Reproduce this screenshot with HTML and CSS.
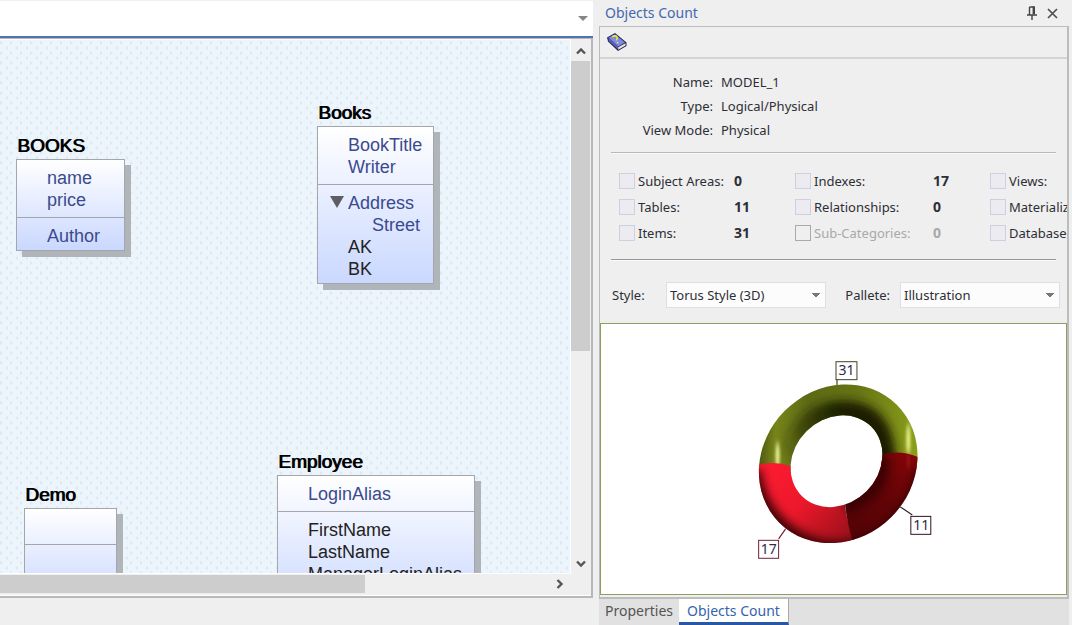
FILE: index.html
```html
<!DOCTYPE html>
<html lang="en">
<head>
<meta charset="utf-8">
<title>Data Modeler</title>
<link rel="stylesheet" href="styles.css">
</head>
<body>
<div class="app">
  <main class="workspace">
    <div class="doc-tabs">
      <button class="icon-btn" type="button" aria-label="Open documents">
        <svg width="10" height="5" viewBox="0 0 10 5"><path d="M0 0h10L5 5z" fill="#868686"/></svg>
      </button>
    </div>
    <div class="viewport">
      <div class="canvas">
        <svg class="texture" aria-hidden="true">
          <defs>
            <pattern id="weave" width="10" height="10" patternUnits="userSpaceOnUse">
              <path d="M0 1l3 2-3 2zM8 6L5 8l3 2z" fill="#dfe8f1"/>
            </pattern>
          </defs>
          <rect width="100%" height="100%" fill="url(#weave)"/>
        </svg>
        <section class="entity entity-books-table">
          <h2 class="entity-name">BOOKS</h2>
          <div class="entity-box">
            <ul class="keys"><li>name</li><li>price</li></ul>
            <ul class="fields"><li class="key">Author</li></ul>
          </div>
        </section>
        <section class="entity entity-books">
          <h2 class="entity-name">Books</h2>
          <div class="entity-box">
            <ul class="keys"><li>BookTitle</li><li>Writer</li></ul>
            <ul class="fields">
              <li class="key group"><svg class="twisty" width="14" height="12" viewBox="0 0 14 12"><path d="M0 0h14L7 12z" fill="#5e5e62"/></svg>Address</li>
              <li class="key nested">Street</li>
              <li>AK</li>
              <li>BK</li>
            </ul>
          </div>
        </section>
        <section class="entity entity-employee">
          <h2 class="entity-name">Employee</h2>
          <div class="entity-box">
            <ul class="keys"><li>LoginAlias</li></ul>
            <ul class="fields"><li>FirstName</li><li>LastName</li><li>ManagerLoginAlias</li><li></li></ul>
          </div>
        </section>
        <section class="entity entity-demo">
          <h2 class="entity-name">Demo</h2>
          <div class="entity-box">
            <ul class="keys"><li></li></ul>
            <ul class="fields"><li></li><li></li></ul>
          </div>
        </section>
      </div>
      <div class="vscroll">
        <button class="icon-btn" type="button" aria-label="Scroll up">
          <svg width="10" height="8" viewBox="0 0 10 8"><path d="M1 6.500L5 2.500 9 6.500" fill="none" stroke="#555" stroke-width="2.400"/></svg>
        </button>
        <div class="vtrack"><div class="vthumb"></div></div>
        <button class="icon-btn" type="button" aria-label="Scroll down">
          <svg width="10" height="8" viewBox="0 0 10 8"><path d="M1 1.500L5 5.500 9 1.500" fill="none" stroke="#555" stroke-width="2.400"/></svg>
        </button>
      </div>
      <div class="hscroll">
        <div class="hthumb"></div>
        <button class="icon-btn" type="button" aria-label="Scroll right">
          <svg width="8" height="10" viewBox="0 0 8 10"><path d="M1.500 1L5.500 5 1.500 9" fill="none" stroke="#555" stroke-width="2.400"/></svg>
        </button>
      </div>
    </div>
  </main>

  <aside class="dock">
    <header class="dock-title">
      <h1>Objects Count</h1>
      <button class="icon-btn" type="button" aria-label="Pin">
        <svg width="10" height="14" viewBox="0 0 10 14"><path d="M2.500 1h5M2.500 1v7.500M0 9h10M5 9v5" fill="none" stroke="#444" stroke-width="1.400"/><path d="M6.800 .5v8" stroke="#444" stroke-width="2.400"/></svg>
      </button>
      <button class="icon-btn" type="button" aria-label="Close">
        <svg width="11" height="11" viewBox="0 0 11 11"><path d="M1 1l9 9M10 1l-9 9" stroke="#505050" stroke-width="1.700"/></svg>
      </button>
    </header>
    <div class="dock-body">
      <div class="toolbar">
        <button class="icon-btn" type="button" aria-label="Help">
          <svg width="22" height="20" viewBox="0 0 22 20">
            <path d="M1 5.500L9 1l11.500 9.500v3.500L12 19 2 9.500z" fill="#26264c"/>
            <path d="M12.200 15.200l7.300-4v2.300l-7.300 4.300z" fill="#ece9df"/>
            <path d="M2.500 5.700L9 2.200l10 8.300-6.800 4z" fill="#7f89e4"/>
            <path d="M2.500 5.700l9.700 8.800v3L2.800 9z" fill="#5660bc"/>
            <path d="M6.500 5.200C7 3.600 9.500 3.300 10.800 4.700c1.200 1.400-.3 2.300-.3 3.700M11 10.200l1.300 1" fill="none" stroke="#e6e23c" stroke-width="1.700"/>
          </svg>
        </button>
      </div>
      <dl class="facts">
        <dt>Name:</dt><dd>MODEL_1</dd>
        <dt>Type:</dt><dd>Logical/Physical</dd>
        <dt>View Mode:</dt><dd>Physical</dd>
      </dl>
      <hr class="rule">
      <div class="counts">
        <div class="count-col count-first">
          <label><input type="checkbox">Subject Areas:</label><output>0</output>
          <label><input type="checkbox">Tables:</label><output>11</output>
          <label><input type="checkbox">Items:</label><output>31</output>
        </div>
        <div class="count-col count-second">
          <label><input type="checkbox">Indexes:</label><output>17</output>
          <label><input type="checkbox">Relationships:</label><output>0</output>
          <label class="off"><input type="checkbox" disabled>Sub-Categories:</label><output class="off">0</output>
        </div>
        <div class="count-col count-third">
          <label><input type="checkbox">Views:</label>
          <label><input type="checkbox">Materialized</label>
          <label><input type="checkbox">Databases:</label>
        </div>
      </div>
      <hr class="rule rule-dark">
      <div class="options">
        <label for="style">Style:</label>
        <select id="style"><option>Torus Style (3D)</option></select>
        <label class="second" for="pallete">Pallete:</label>
        <select id="pallete"><option>Illustration</option></select>
      </div>
      <div class="chart">
        <svg class="torus" viewBox="601 324 466 270" role="img" aria-label="Items 31, Indexes 17, Tables 11">
          <defs>
            <linearGradient id="olive" gradientUnits="userSpaceOnUse" x1="760" y1="430" x2="918" y2="440">
              <stop offset="0" stop-color="#4c5610"/><stop offset=".1" stop-color="#76841a"/><stop offset=".3" stop-color="#5d6913"/><stop offset=".6" stop-color="#667413"/><stop offset="1" stop-color="#8a9e1a"/>
            </linearGradient>
            <linearGradient id="crimson" gradientUnits="userSpaceOnUse" x1="775" y1="462" x2="852" y2="535">
              <stop offset="0" stop-color="#fb1b31"/><stop offset=".45" stop-color="#ed182b"/><stop offset="1" stop-color="#9b101a"/>
            </linearGradient>
            <linearGradient id="maroon" gradientUnits="userSpaceOnUse" x1="915" y1="450" x2="845" y2="535">
              <stop offset="0" stop-color="#860509"/><stop offset=".5" stop-color="#620306"/><stop offset="1" stop-color="#530306"/>
            </linearGradient>
            <linearGradient id="fade" gradientUnits="userSpaceOnUse" x1="850" y1="420" x2="796" y2="470">
              <stop offset="0" stop-color="#1a1e02"/><stop offset=".5" stop-color="#1a1e02" stop-opacity=".5"/><stop offset="1" stop-color="#1a1e02" stop-opacity="0"/>
            </linearGradient>
            <clipPath id="ring">
              <path clip-rule="evenodd" transform="translate(838.700 463.800) rotate(-45)" d="M-83.400 0a83.400 75.400 0 1 0 166.800 0a83.400 75.400 0 1 0-166.800 0zM-48.600 -3a49.200 42.600 0 1 0 98.400 0a49.200 42.600 0 1 0-98.400 0z"/>
            </clipPath>
            <filter id="soft" x="-50%" y="-50%" width="200%" height="200%"><feGaussianBlur stdDeviation="5"/></filter>
            <filter id="glow" x="-400%" y="-50%" width="900%" height="200%"><feGaussianBlur stdDeviation="1.500 3"/></filter>
          </defs>
          <g fill="none" stroke-width="1.200">
            <path d="M837.500 379v6" stroke="#3c4420"/>
            <path d="M901 507l12 8" stroke="#30242a"/>
            <path d="M786 529l-7 10" stroke="#7c2030"/>
          </g>
          <g clip-path="url(#ring)">
            <path d="M750 370h180v100H750z" fill="url(#olive)"/>
            <path d="M790 480C790 438 815 414 844 414S884 432 884 470" fill="none" stroke="url(#fade)" stroke-width="26" filter="url(#soft)"/>
            <ellipse cx="778" cy="456" rx="2" ry="14" fill="#f4f7a0" filter="url(#glow)"/>
            <ellipse cx="909" cy="440" rx="2" ry="16" fill="#eef58c" filter="url(#glow)"/>
            <path d="M755 466Q773 460 791 466L850 480 845.500 505Q847 524 858 545H750z" fill="url(#crimson)"/>
            <path d="M882 455Q900 449 921 458V550H856Q847 524 845.500 502z" fill="url(#maroon)"/>
            <path d="M883 455Q889 488 846 508" fill="none" stroke="#250003" stroke-width="12" stroke-opacity=".7" filter="url(#soft)"/>
            <path d="M753 470C756 514 795 551 842 551C884 549 921 510 924 470" fill="none" stroke="#260005" stroke-width="18" stroke-opacity=".85" filter="url(#soft)"/>
            <ellipse cx="909" cy="461" rx="1" ry="9" fill="#b02826" fill-opacity=".7" filter="url(#glow)"/>
          </g>
          <g class="tags">
            <rect x="836.500" y="361.500" width="21" height="18" fill="#fff" stroke="#3c4420"/>
            <rect x="911.500" y="516.500" width="20" height="18" fill="#fff" stroke="#30141c"/>
            <rect x="759" y="540.500" width="20" height="18" fill="#fff" stroke="#6c2032"/>
            <text x="847" y="375">31</text>
            <text x="922" y="530">11</text>
            <text x="769" y="554">17</text>
          </g>
        </svg>
      </div>
    </div>
    <nav class="dock-tabs">
      <button class="dock-tab" type="button">Properties</button>
      <button class="dock-tab active" type="button">Objects Count</button>
    </nav>
  </aside>
</div>
</body>
</html>
```

FILE: styles.css
```css
* { box-sizing: border-box; }

body {
  margin: 0;
  background: #efefef;
  color: #2e2e36;
  font: 13px/20px "Noto Sans", "Open Sans", sans-serif;
}

h1, h2, ul, dl, dd { margin: 0; padding: 0; font-weight: 400; }
ul { list-style: none; }

.app {
  display: flex;
  gap: 6px;
  height: 100vh;
  padding-right: 3px;
  overflow: hidden;
}

.icon-btn {
  display: flex;
  align-items: center;
  justify-content: center;
  padding: 0;
  border: 0;
  background: none;
}

/* Diagram workspace */
.workspace {
  display: flex;
  flex: 1;
  flex-direction: column;
  min-width: 0;
  padding-bottom: 27px;
}

.doc-tabs {
  display: flex;
  flex: none;
  align-items: center;
  justify-content: flex-end;
  height: 38px;
  padding-right: 5px;
  border-top: 1px solid #efefef;
  border-bottom: 2px solid #4f74b2;
  background: #fff;
}

.viewport {
  display: grid;
  flex: 1;
  grid-template: minmax(0, 1fr) 22px / minmax(0, 1fr) 20px;
  min-height: 0;
  border: solid #b8b8bc;
  border-width: 1px 2px 2px 0;
}

.canvas {
  position: relative;
  overflow: hidden;
  border: solid #fff;
  border-width: 1px 1px 1px 0;
  background: #ecf4fc;
}

.texture {
  position: absolute;
  inset: 0;
  width: 100%;
  height: 100%;
}

.vscroll {
  display: flex;
  flex-direction: column;
  padding: 1px 1px 0 0;
}
.vscroll .icon-btn { height: 21px; }
.vtrack { flex: 1; }
.vthumb { height: 59%; background: #cdcdcd; }

.hscroll {
  display: flex;
  grid-column: 1 / -1;
  justify-content: space-between;
  padding: 1px 21px 2px 0;
  border-bottom: 1px solid #fff;
}
.hthumb { width: 64%; background: #cdcdcd; }
.hscroll .icon-btn { width: 20px; }

.entity {
  position: absolute;
  color: #222;
  font: 18px/22px "Liberation Sans", Arial, sans-serif;
}
.entity-books-table { top: 94px; left: 16px; width: 109px; }
.entity-books { top: 61px; left: 317px; width: 117px; }
.entity-employee { top: 410px; left: 277px; width: 198px; }
.entity-demo { top: 443px; left: 24px; width: 93px; }

.entity-name {
  padding: 0 0 2px 1px;
  color: #000;
  font-size: 19px;
  line-height: 23px;
  text-shadow: 1px 0 0 #000;
}

.entity-box {
  border: 1px solid #a4a6ac;
  background: linear-gradient(#fff, #cad8ff);
  box-shadow: 6px 6px 0 #afb5b8;
}
.entity-box li { min-height: 22px; white-space: nowrap; }
.keys, .key { color: #3b4a8e; }
.keys { padding: 7px 0 6px 30px; }
.fields { padding: 7px 0 3px 30px; border-top: 1px solid #a4a6ac; }
.group { position: relative; }
.nested { padding-left: 24px; }
.twisty { position: absolute; top: 4px; left: -18px; }

/* Docked panel */
.dock {
  display: flex;
  flex: none;
  flex-direction: column;
  width: 44%;
  max-width: 470px;
}

.dock-title {
  display: flex;
  flex: none;
  gap: 10px;
  align-items: center;
  height: 26px;
  padding: 0 11px 0 6px;
}
.dock-title h1 {
  flex: 1;
  color: #4368b0;
  font-size: 14px;
}

.dock-body {
  display: flex;
  flex: 1;
  flex-direction: column;
  min-height: 0;
  overflow: hidden;
  border: solid #bcbcbc;
  border-width: 1px 2px 2px 1px;
}

.toolbar {
  display: flex;
  flex: none;
  align-items: center;
  height: 32px;
  padding-left: 6px;
  border-bottom: 2px solid #d4d4d4;
}

.facts {
  display: grid;
  grid-template-columns: 113px 1fr;
  column-gap: 8px;
  padding: 11px 0 10px;
  line-height: 24px;
}
.facts dt { text-align: right; }

.rule {
  flex: none;
  width: auto;
  height: 2px;
  margin: 0 11px;
  border: 0;
  border-bottom: 1px solid #fafafa;
  background: #b8b8b8;
}
.rule-dark { background: #989898; }

.counts {
  display: flex;
  padding: 14px 0 13px 19px;
  line-height: 26px;
}
.count-col {
  display: grid;
  flex: none;
  grid-auto-rows: 26px;
}
.count-first { grid-template-columns: 115px 61px; }
.count-second { grid-template-columns: 138px 57px; }
.counts label {
  display: flex;
  gap: 3px;
  align-items: center;
  white-space: nowrap;
}
.counts input {
  width: 16px;
  height: 16px;
  margin: 0;
  border: 1px solid #cfcfdf;
  background: #ebebf1;
  appearance: none;
}
.counts input:disabled { border-color: #aaa; background: #efefef; }
.counts output { font-size: 14px; font-weight: 700; }
.counts .off { color: #a9a9a9; }

.options {
  display: grid;
  flex: none;
  grid-template-columns: 54px 1fr 74px 1fr;
  align-items: center;
  padding: 21px 7px 15px 12px;
}
.options label { white-space: nowrap; }
.options .second { padding-right: 10px; text-align: right; }
.options select {
  width: 100%;
  height: 26px;
  padding: 0 3px;
  border: 1px solid #dedee8;
  border-radius: 0;
  color: inherit;
  font: inherit;
  background:
    conic-gradient(from -45deg at 50% 100%, #777 90deg, transparent 0) right 5px center / 8px 4px no-repeat,
    #fcfcfc;
  appearance: none;
}

.chart {
  flex: 1;
  min-height: 0;
  margin-bottom: 2px;
  border: 1px solid #8ba05e;
  background: #fff;
}
.torus { display: block; width: 100%; height: 100%; }
.tags text {
  fill: #2e2e48;
  font-size: 14px;
  text-anchor: middle;
}

.dock-tabs {
  display: flex;
  flex: none;
  height: 26px;
  background: #e1e1e1;
}
.dock-tab {
  padding: 0 6px 2px;
  border: 0;
  background: none;
  color: #555;
  font: inherit;
  font-size: 14px;
}
.dock-tab.active {
  padding: 0 8px;
  border-right: 1px solid #aaa;
  border-bottom: 3px solid #2858a4;
  background: #fff;
  color: #3564ac;
}
```
